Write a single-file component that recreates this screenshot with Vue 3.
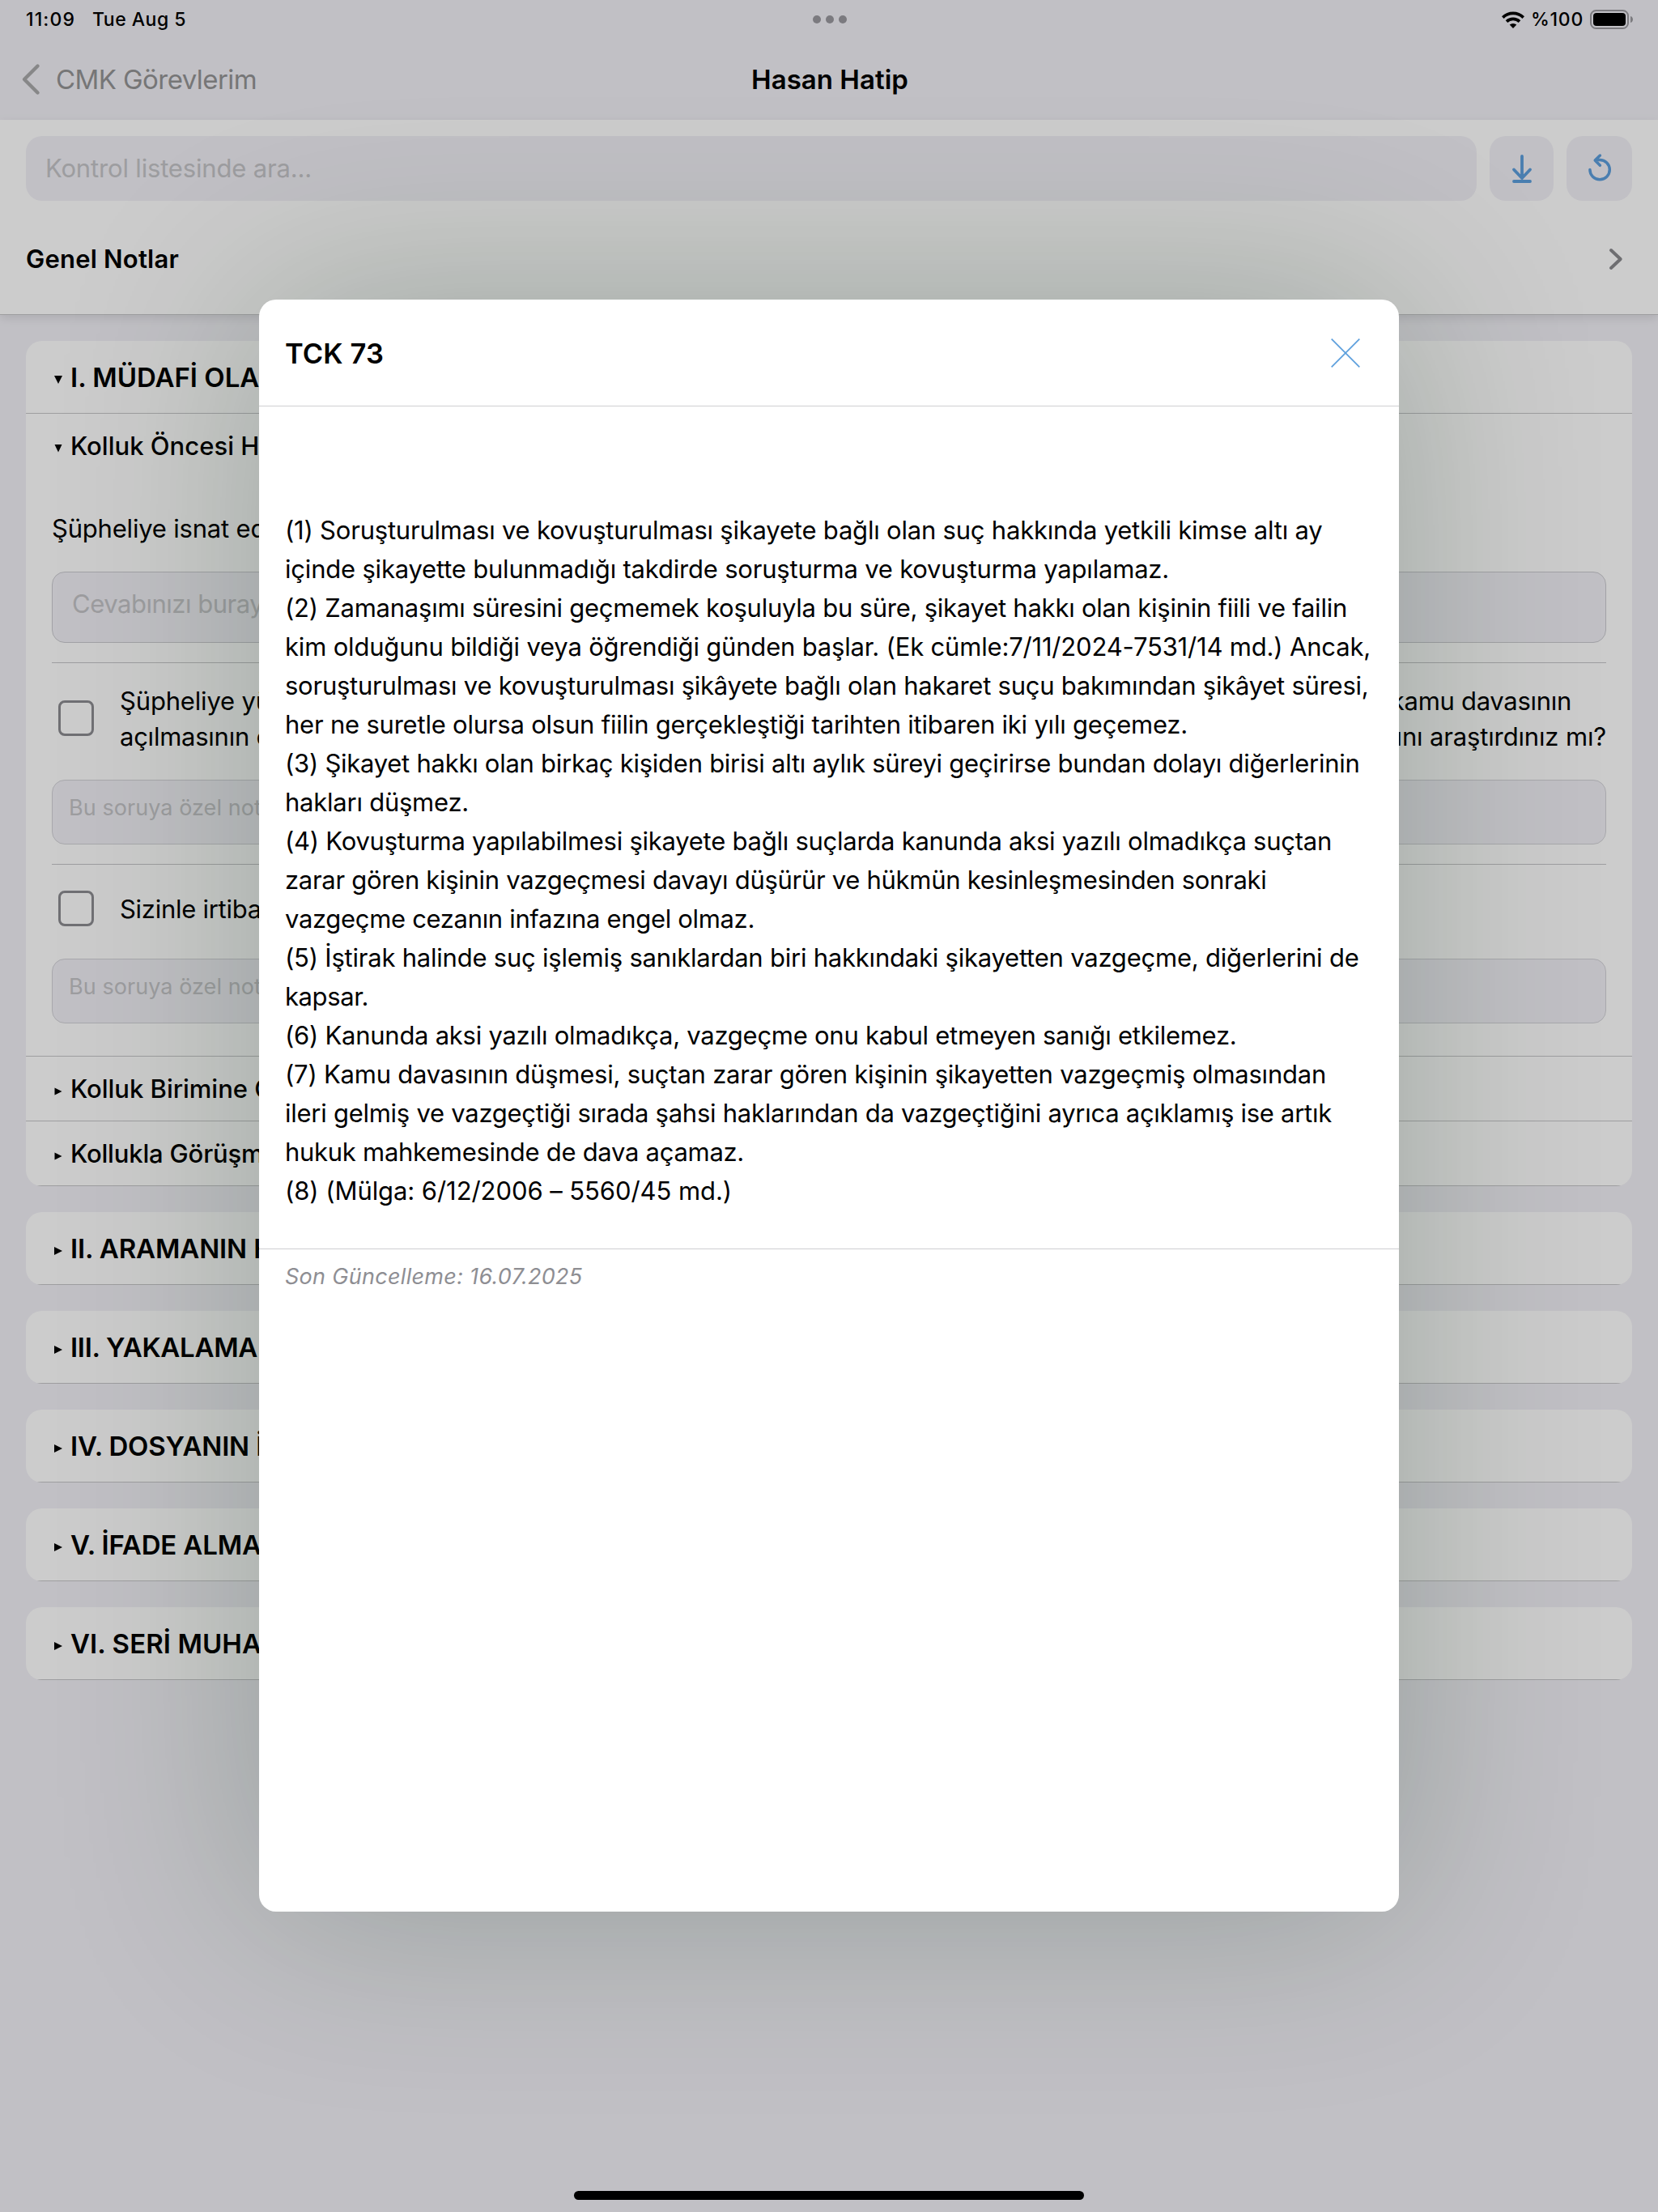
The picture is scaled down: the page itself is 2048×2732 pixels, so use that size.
<script setup>
const paragraphs = [
  ['(1) Soruşturulması ve kovuşturulması şikayete bağlı olan suç hakkında yetkili kimse altı ay', 1281.5],
  ['içinde şikayette bulunmadığı takdirde soruşturma ve kovuşturma yapılamaz.', 1092],
  ['(2) Zamanaşımı süresini geçmemek koşuluyla bu süre, şikayet hakkı olan kişinin fiili ve failin', 1312],
  ['kim olduğunu bildiği veya öğrendiği günden başlar. (Ek cümle:7/11/2024-7531/14 md.) Ancak,', 1341],
  ['soruşturulması ve kovuşturulması şikâyete bağlı olan hakaret suçu bakımından şikâyet süresi,', 1338.5],
  ['her ne suretle olursa olsun fiilin gerçekleştiği tarihten itibaren iki yılı geçemez.', 1115],
  ['(3) Şikayet hakkı olan birkaç kişiden birisi altı aylık süreyi geçirirse bundan dolayı diğerlerinin', 1327.5],
  ['hakları düşmez.', 227],
  ['(4) Kovuşturma yapılabilmesi şikayete bağlı suçlarda kanunda aksi yazılı olmadıkça suçtan', 1293],
  ['zarar gören kişinin vazgeçmesi davayı düşürür ve hükmün kesinleşmesinden sonraki', 1212.5],
  ['vazgeçme cezanın infazına engel olmaz.', 580],
  ['(5) İştirak halinde suç işlemiş sanıklardan biri hakkındaki şikayetten vazgeçme, diğerlerini de', 1326.5],
  ['kapsar.', 103],
  ['(6) Kanunda aksi yazılı olmadıkça, vazgeçme onu kabul etmeyen sanığı etkilemez.', 1175.5],
  ['(7) Kamu davasının düşmesi, suçtan zarar gören kişinin şikayetten vazgeçmiş olmasından', 1286],
  ['ileri gelmiş ve vazgeçtiği sırada şahsi haklarından da vazgeçtiğini ayrıca açıklamış ise artık', 1293],
  ['hukuk mahkemesinde de dava açamaz.', 567],
  ['(8) (Mülga: 6/12/2006 – 5560/45 md.)', 552],
]

const sections = [
  { title: 'II. ARAMANIN HUKUKA UYGUNLUĞU', fit: ['II. ARAMANIN', 218] },
  { title: 'III. YAKALAMA', fit: ['III. YAKALAMA', 231] },
  { title: 'IV. DOSYANIN İNCELENMESİ', fit: ['IV. DOSYANIN', 221] },
  { title: 'V. İFADE ALMA', fit: ['V. İFADE ALM', 212] },
  { title: 'VI. SERİ MUHAKEME', fit: ['VI. SERİ MUH', 212] },
]

// Tracks text so that the given part of it takes the given width: [part, width]
const vFit = {
  mounted(el, { value: [part, width] }) {
    const node = el.firstChild
    const start = node.textContent.indexOf(part)
    if (start < 0) return
    const range = document.createRange()
    range.setStart(node, start)
    range.setEnd(node, start + part.length)
    const natural = range.getBoundingClientRect().width
    el.style.letterSpacing = `${(width - natural) / part.length}px`
  },
}
</script>

<template>
  <div class="screen">
    <div class="statusbar">
      <div class="clock">
        <span v-fit="['11:09', 61]" class="time">11:09</span>
        <span v-fit="['Tue Aug 5', 116]">Tue Aug 5</span>
      </div>
      <div class="dots"><i></i><i></i><i></i></div>
      <div class="indicators">
        <svg class="wifi" viewBox="0 0 28 21" width="28" height="21">
          <g fill="none" stroke="#000" stroke-width="3.7">
            <path d="M1.3 7.6a18.2 18.2 0 0 1 25.4 0" />
            <path d="M6 12.6a11.6 11.6 0 0 1 16 0" />
          </g>
          <path d="M14 21l-4.3-4.4a6.3 6.3 0 0 1 8.600 0z" />
        </svg>
        <span v-fit="['%100', 65]">%100</span>
        <svg class="battery" viewBox="0 0 54 24" width="54" height="24">
          <rect x="1" y="1" width="46" height="22" rx="6.500" fill="none" stroke="#9b9a9f" stroke-width="2" />
          <rect x="4" y="4" width="40" height="16" rx="4" />
          <path d="M50 8c4 1 4 7 0 8z" fill="#9b9a9f" />
        </svg>
      </div>
    </div>

    <div class="navbar">
      <div class="back">
        <svg viewBox="0 0 24 40" width="24" height="40">
          <path d="M20.500 3.500L4 20l16.500 16.500" fill="none" stroke="#a9a9aa" stroke-width="4.400" stroke-linecap="round" stroke-linejoin="round" />
        </svg>
        <span v-fit="['CMK Görevlerim', 248]">CMK Görevlerim</span>
      </div>
      <h1 v-fit="['Hasan Hatip', 194]">Hasan Hatip</h1>
      <div class="nav-end"></div>
    </div>

    <div class="toolbar">
      <div class="search-row">
        <div class="search"><span v-fit="['Kontrol listesinde ara...', 329]">Kontrol listesinde ara...</span></div>
        <div class="tool download">
          <svg viewBox="0 0 28 36" width="28" height="36">
            <path d="M14 3v27M4 19.500l10 10.500 10-10.500M4 34h20" fill="none" stroke="#5c9edc" stroke-width="3.800" stroke-linecap="round" stroke-linejoin="round" />
          </svg>
        </div>
        <div class="tool reset">
          <svg viewBox="0 0 32 38" width="32" height="38">
            <path d="M3.900 20.600a12.200 12.200 0 1 0 12.200-12.200q-2.600 0-5.600.4M16.400 3L10.200 9l6.200 6.300" fill="none" stroke="#5c9edc" stroke-width="3.500" stroke-linecap="round" stroke-linejoin="round" />
          </svg>
        </div>
      </div>
      <div class="notes-row">
        <span v-fit="['Genel Notlar', 189]">Genel Notlar</span>
        <svg viewBox="0 0 18 28" width="18" height="28">
          <path d="M3 3l11.700 11L3 25" fill="none" stroke="#8a8a8e" stroke-width="4" stroke-linecap="round" stroke-linejoin="round" />
        </svg>
      </div>
    </div>

    <div class="list">
      <section class="card">
        <div class="card-head">
          <svg class="tri" viewBox="0 0 10 10" width="10" height="10"><path d="M0 0h10L5 10z" /></svg>
          <span v-fit="['I. MÜDAFİ', 157]">I. MÜDAFİ OLARAK</span>
        </div>
        <div class="sub-head plain">
          <svg class="tri" viewBox="0 0 10 10" width="10" height="10"><path d="M.5 0h9L5 9.500z" /></svg>
          <span v-fit="['Kolluk Öncesi', 202]">Kolluk Öncesi Hazırlık</span>
        </div>
        <div class="questions">
          <div class="question">
            <p class="prompt" v-fit="['Şüpheliye isnat', 219]">Şüpheliye isnat edilen</p>
            <div class="answer tall"><span v-fit="['Cevabınızı', 147]">Cevabınızı buraya</span></div>
          </div>
          <div class="question">
            <div class="check-row double">
              <i class="box"></i>
              <div class="text">
                <p class="first"><span v-fit="['Şüpheliye', 142]">Şüpheliye yüklenen</span><span v-fit="['davasının', 136]">kamu davasının</span></p>
                <p><span v-fit="['açılmasının', 160]">açılmasının olup</span><span v-fit="['araştırdınız mı?', 218]">olmadığını araştırdınız mı?</span></p>
              </div>
            </div>
            <div class="answer"><span v-fit="['Bu soruya özel', 189]">Bu soruya özel not</span></div>
          </div>
          <div class="question last">
            <div class="check-row single">
              <i class="box"></i>
              <div class="text"><p><span v-fit="['Sizinle', 94]">Sizinle irtibat</span></p></div>
            </div>
            <div class="answer"><span v-fit="['Bu soruya özel', 189]">Bu soruya özel not</span></div>
          </div>
        </div>
        <div class="sub-head">
          <svg class="tri" viewBox="0 0 10 10" width="10" height="10"><path d="M.5.500L9.500 5l-9 4.500z" /></svg>
          <span v-fit="['Kolluk Birimine', 219]">Kolluk Birimine Gidiş</span>
        </div>
        <div class="sub-head">
          <svg class="tri" viewBox="0 0 10 10" width="10" height="10"><path d="M.5.500L9.500 5l-9 4.500z" /></svg>
          <span v-fit="['Kollukla Görüş', 211]">Kollukla Görüşme</span>
        </div>
      </section>

      <section v-for="s in sections" :key="s.title" class="card">
        <div class="card-head">
          <svg class="tri" viewBox="0 0 10 10" width="10" height="10"><path d="M0 0l10 5-10 5z" /></svg>
          <span v-fit="s.fit">{{ s.title }}</span>
        </div>
      </section>
    </div>

    <div class="overlay">
      <div class="modal">
        <header>
          <h2 v-fit="['TCK 73', 122]">TCK 73</h2>
          <svg viewBox="0 0 36 36" width="36" height="36">
            <path d="M.7.700l34.600 34.600M35.300.700L.7 35.300" fill="none" stroke="#5c9fdd" stroke-width="1.700" />
          </svg>
        </header>
        <div class="article">
          <p v-for="[line, width] in paragraphs" :key="line" v-fit="[line, width]">{{ line }}</p>
        </div>
        <footer><span v-fit="['Son Güncelleme: 16.07.2025', 367.5]">Son Güncelleme: 16.07.2025</span></footer>
      </div>
      <div class="home"></div>
    </div>
  </div>
</template>

<style>
body {
  margin: 0;
  background: #f2f1f7;
}
</style>

<style scoped>
.screen {
  position: relative;
  width: 2048px;
  height: 2732px;
  overflow: hidden;
  background: #f2f1f7;
  color: #000;
  font-family: Inter, "Liberation Sans", sans-serif;
  font-size: 31px;
}
.screen * {
  box-sizing: border-box;
}
p,
h1,
h2 {
  margin: 0;
}
span,
p,
h1,
h2 {
  white-space: nowrap;
}
svg {
  display: block;
  flex: none;
}
.statusbar {
  display: grid;
  grid-template-columns: 1fr auto 1fr;
  align-items: center;
  height: 48px;
  padding: 0 30px 0 32px;
  font-size: 23px;
  font-weight: 500;
  line-height: 48px;
}
.clock {
  display: flex;
}
.time {
  width: 82px;
}
.dots {
  display: flex;
  gap: 6px;
}
.dots i {
  width: 10px;
  height: 10px;
  border-radius: 50%;
  background: #9a999f;
}
.indicators {
  display: flex;
  align-items: center;
  justify-content: flex-end;
}
.indicators span {
  margin: 0 8px 0 8px;
}
.navbar {
  display: grid;
  grid-template-columns: 1fr auto 1fr;
  align-items: center;
  height: 100px;
  padding: 0 26px;
  font-size: 33px;
}
.back {
  display: flex;
  align-items: center;
  gap: 19px;
  color: #949495;
}
h1 {
  padding-left: 2px;
  font-size: 33px;
  font-weight: 600;
}
.toolbar {
  position: relative;
  height: 241px;
  padding: 20px 32px 0;
  border-bottom: 1px solid #c6c6c8;
  background: #fff;
  box-shadow: 0 4px 12px rgba(0, 0, 0, 0.1);
}
.search-row {
  display: flex;
  gap: 16px;
}
.search {
  flex: 1;
  height: 80px;
  padding-left: 24px;
  border-radius: 20px;
  background: #f2f1f7;
  color: #c5c5c8;
  line-height: 79px;
}
.tool {
  display: flex;
  align-items: center;
  justify-content: center;
  height: 80px;
  border-radius: 20px;
  background: #f2f1f7;
}
.download {
  width: 79px;
}
.reset {
  width: 81px;
}
.notes-row {
  display: flex;
  align-items: center;
  justify-content: space-between;
  height: 143px;
  padding-right: 11px;
  font-weight: 600;
}
.list {
  display: flex;
  flex-direction: column;
  gap: 32px;
  padding: 32px 32px 0;
}
.card {
  overflow: hidden;
  border-radius: 20px;
  background: #fff;
}
.card-head,
.sub-head {
  display: flex;
  align-items: center;
  padding-left: 35px;
  border-bottom: 1px solid #c6c6c8;
}
.card-head {
  height: 90px;
  font-size: 33px;
  font-weight: 600;
}
.sub-head {
  height: 80px;
  font-weight: 500;
}
.sub-head.plain {
  border-bottom-color: transparent;
}
.tri {
  margin: 6px 10px 0 0;
}
.questions {
  padding: 0 32px;
  border-bottom: 1px solid #c6c6c8;
}
.question {
  border-bottom: 1px solid #c6c6c8;
  padding-bottom: 24px;
}
.question.last {
  padding-bottom: 40px;
  border-bottom: 0;
}
.prompt {
  padding: 40px 0 31px;
  line-height: 44px;
}
.answer {
  height: 80px;
  padding-left: 20px;
  border: 1px solid #d3d3d8;
  border-radius: 16px;
  background: #f2f1f7;
  color: #c5c5c8;
  font-size: 27px;
  line-height: 67px;
}
.answer.tall {
  height: 88px;
  padding-left: 24px;
  border-color: #cbcbd0;
  font-size: 31px;
  line-height: 78px;
}
.check-row {
  display: flex;
  align-items: center;
  padding-left: 8px;
}
.check-row.double {
  height: 144px;
  padding-bottom: 8px;
}
.check-row.single {
  height: 116px;
  padding-bottom: 8px;
}
.box {
  flex: none;
  width: 44px;
  height: 44px;
  border: 3px solid #8c8c91;
  border-radius: 8px;
}
.text {
  flex: 1;
  padding: 2px 0 0 32px;
  line-height: 44px;
}
.text p {
  display: flex;
  justify-content: space-between;
}
.text .first {
  padding-right: 43px;
}
.overlay {
  position: absolute;
  inset: 0;
  background: rgba(0, 0, 0, 0.2);
}
.modal {
  position: absolute;
  left: 320px;
  top: 370px;
  width: 1408px;
  height: 1991px;
  border-radius: 21px;
  background: #fff;
  box-shadow: 0 0 250px rgba(0, 42, 14, 0.235);
}
.modal header {
  display: flex;
  align-items: center;
  justify-content: space-between;
  height: 132px;
  padding: 0 48px 0 32px;
  border-bottom: 1px solid #cfcfd1;
}
h2 {
  padding-top: 2px;
  font-size: 34.5px;
  font-weight: 600;
}
.article {
  padding: 129px 32px 47px;
  border-bottom: 1px solid #cfcfd1;
  line-height: 48px;
}
footer {
  padding-left: 32px;
  color: #8e8e93;
  font-size: 27px;
  font-style: italic;
  line-height: 68px;
}
.home {
  position: absolute;
  left: 709px;
  top: 2706px;
  width: 630px;
  height: 11px;
  border-radius: 6px;
  background: #000;
}
</style>
